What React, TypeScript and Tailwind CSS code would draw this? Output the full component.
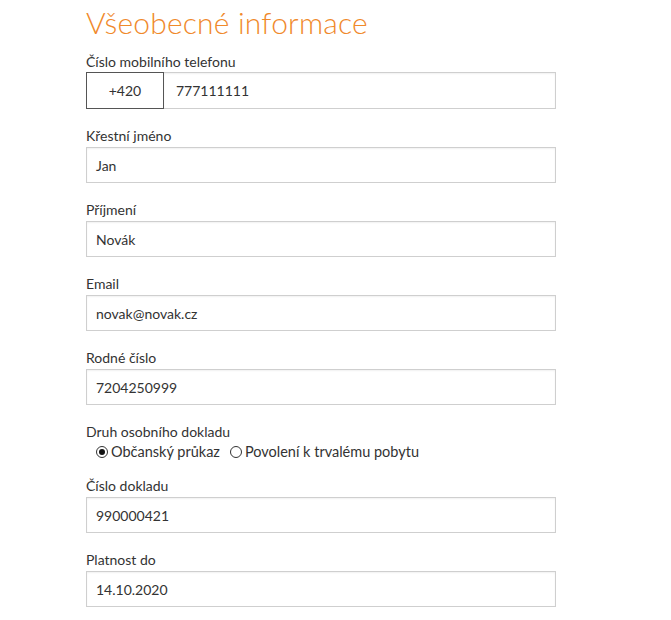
import React from "react";

type FieldProps = {
  label: string;
  value: string;
};

function Field({ label, value }: FieldProps) {
  return (
    <div className="flex flex-col">
      <label className="text-[14px] leading-[18px] text-[#333]">{label}</label>
      <div className="mt-[2px] h-[36px] w-[470px] border border-[#cfcfcf] shadow-[inset_0_1px_2px_rgba(0,0,0,0.06)] bg-white px-[9px] flex items-center text-[14px] text-[#333]">
        {value}
      </div>
    </div>
  );
}

function Radio({ checked, label }: { checked: boolean; label: string }) {
  return (
    <span className="flex items-center gap-[3px]">
      <span className="w-[12px] h-[12px] rounded-full border border-[#333] flex items-center justify-center">
        {checked && <span className="w-[6px] h-[6px] rounded-full bg-[#111]" />}
      </span>
      <span>{label}</span>
    </span>
  );
}

export default function App() {
  return (
    <div
      className="min-h-[620px] bg-white pl-[86px] pt-[3px]"
      style={{ fontFamily: "Lato, 'Noto Sans', sans-serif" }}
    >
      <h1 className="text-[30px] leading-[38px] text-[#f0892b] font-light tracking-[0.2px]">
        Všeobecné informace
      </h1>
      <div className="mt-[12px] flex flex-col gap-[18px]">
        <div className="flex flex-col">
          <label className="text-[14px] leading-[18px] text-[#333]">
            Číslo mobilního telefonu
          </label>
          <div className="mt-[1px] flex w-[470px] h-[37px]">
            <div className="w-[78px] border border-[#555] flex items-center justify-center text-[14px] text-[#333]">
              +420
            </div>
            <div className="flex-1 border border-l-0 border-[#cfcfcf] shadow-[inset_0_1px_2px_rgba(0,0,0,0.06)] px-[12px] flex items-center text-[14px] text-[#333]">
              777111111
            </div>
          </div>
        </div>
        <Field label="Křestní jméno" value="Jan" />
        <Field label="Příjmení" value="Novák" />
        <Field label="Email" value="novak@novak.cz" />
        <Field label="Rodné číslo" value="7204250999" />
        <div className="flex flex-col mb-[-2px]">
          <label className="text-[14px] leading-[18px] text-[#333]">
            Druh osobního dokladu
          </label>
          <div className="mt-[2px] ml-[10px] flex gap-[10px] text-[14.5px] leading-[18px] text-[#333]">
            <Radio checked label="Občanský průkaz" />
            <Radio checked={false} label="Povolení k trvalému pobytu" />
          </div>
        </div>
        <Field label="Číslo dokladu" value="990000421" />
        <Field label="Platnost do" value="14.10.2020" />
      </div>
    </div>
  );
}
